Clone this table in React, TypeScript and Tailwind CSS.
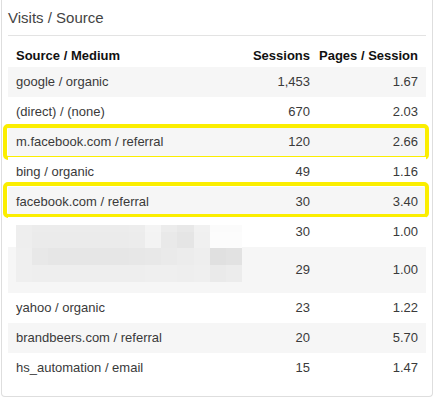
import React from "react";

type Row = {
  source: string;
  sessions: string;
  pages: string;
  mark?: "a" | "b";
  blur?: boolean;
  tall?: boolean;
};

const rows: Row[] = [
  { source: "google / organic", sessions: "1,453", pages: "1.67" },
  { source: "(direct) / (none)", sessions: "670", pages: "2.03" },
  { source: "m.facebook.com / referral", sessions: "120", pages: "2.66", mark: "a" },
  { source: "bing / organic", sessions: "49", pages: "1.16" },
  { source: "facebook.com / referral", sessions: "30", pages: "3.40", mark: "b" },
  { source: "", sessions: "30", pages: "1.00", blur: true },
  { source: "", sessions: "29", pages: "1.00", tall: true },
  { source: "yahoo / organic", sessions: "23", pages: "1.22" },
  { source: "brandbeers.com / referral", sessions: "20", pages: "5.70" },
  { source: "hs_automation / email", sessions: "15", pages: "1.47" },
];

// pixelated blur over the hidden source names, 14 x 4 blocks
const mosaic: string[][] = [
  ["bg-[#eeeeee]", "bg-[#ececec]", "bg-[#ececec]", "bg-[#ececec]", "bg-[#ececec]", "bg-[#ececec]", "bg-[#ececec]", "bg-[#ededed]", "bg-[#f4f4f4]", "bg-[#ececec]", "bg-[#e8e8e8]", "bg-[#f1f1f1]", "bg-[#fbfbfb]", "bg-[#fbfbfb]"],
  ["bg-[#eeeeee]", "bg-[#ebebeb]", "bg-[#ebebeb]", "bg-[#ebebeb]", "bg-[#ebebeb]", "bg-[#ebebeb]", "bg-[#ebebeb]", "bg-[#ececec]", "bg-[#f3f3f3]", "bg-[#e9e9e9]", "bg-[#e5e5e5]", "bg-[#f0f0f0]", "bg-[#fcfcfc]", "bg-[#fcfcfc]"],
  ["bg-[#efefef]", "bg-[#e8e8e8]", "bg-[#e6e6e6]", "bg-[#e6e6e6]", "bg-[#e6e6e6]", "bg-[#e6e6e6]", "bg-[#e6e6e6]", "bg-[#e7e7e7]", "bg-[#e8e8e8]", "bg-[#eaeaea]", "bg-[#ececec]", "bg-[#eeeeee]", "bg-[#e0e0e0]", "bg-[#e2e2e2]"],
  ["bg-[#efefef]", "bg-[#eeeeee]", "bg-[#eeeeee]", "bg-[#eeeeee]", "bg-[#eeeeee]", "bg-[#eeeeee]", "bg-[#eeeeee]", "bg-[#eeeeee]", "bg-[#efefef]", "bg-[#efefef]", "bg-[#eeeeee]", "bg-[#efefef]", "bg-[#eaeaea]", "bg-[#ececec]"],
];
const mosaicHeights = ["h-[7px]", "h-[16px]", "h-[17px]", "h-[17px]"];

function Mosaic() {
  return (
    <div className="absolute left-[8px] top-[8px] z-10 flex w-[226px] flex-col">
      {mosaic.map((line, i) => (
        <div key={i} className={`grid grid-cols-[repeat(14,1fr)] ${mosaicHeights[i]}`}>
          {line.map((c, j) => (
            <div key={j} className={c} />
          ))}
        </div>
      ))}
    </div>
  );
}

export default function App() {
  return (
    <div
      className="h-[398px] w-[436px] bg-white"
      style={{ fontFamily: '"Liberation Sans", Arial, sans-serif' }}
    >
      <div className="ml-px h-[397px] w-[432px] rounded-b-[4px] border-x border-b border-[#dedede] px-[6px]">
        <div className="flex h-[36px] items-center border-b border-[#e3e3e3] pt-[2px] text-[15px] text-[#444]">
          Visits / Source
        </div>

        <div className="grid grid-cols-[1fr_71px_108px] pt-[12px] pb-[4px] text-[13px] leading-[15px] font-bold text-[#111]">
          <div className="pl-2">Source / Medium</div>
          <div className="pr-2 text-right">Sessions</div>
          <div className="pr-2 text-right">Pages / Session</div>
        </div>

        <div className="text-[13px] text-[#3a3a3a]">
          {rows.map((r, i) => (
            <div
              key={i}
              className={`relative grid grid-cols-[1fr_71px_108px] items-center ${
                r.tall ? "h-[46px]" : "h-[30px]"
              } ${i % 2 === 0 ? "bg-[#f6f6f6]" : "bg-white"}`}
            >
              <div className="pl-2">{r.source}</div>
              <div className="pr-2 text-right">{r.sessions}</div>
              <div className="pr-2 text-right">{r.pages}</div>
              {r.blur && <Mosaic />}
              {r.mark === "a" && (
                <div className="absolute -top-[3px] -bottom-[3px] -left-[5px] -right-[3px] rounded-[5px] border-4 border-[#fbee00]" />
              )}
              {r.mark === "b" && (
                <div className="absolute -top-[5px] -bottom-[1px] -left-[5px] -right-[3px] rounded-[5px] border-4 border-[#fbee00]" />
              )}
            </div>
          ))}
        </div>
      </div>
    </div>
  );
}
